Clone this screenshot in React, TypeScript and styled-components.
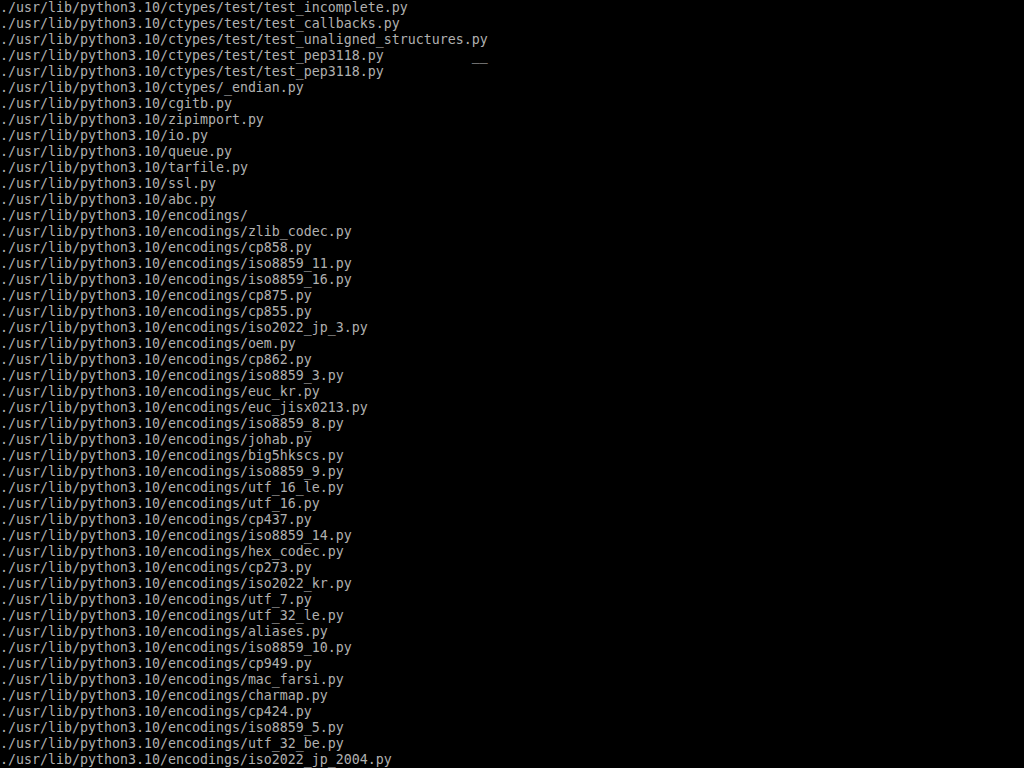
import React from "react";
import styled, {createGlobalStyle} from "styled-components";

const GlobalStyle = createGlobalStyle`
  html, body {
    margin: 0;
    padding: 0;
    background: #000;
  }
`;

const Screen = styled.div`
  width: 1024px;
  height: 768px;
  overflow: hidden;
  background: #000;
  color: #b0b0b0;
  font-family: "DejaVu Sans Mono", "Liberation Mono", monospace;
  font-size: 13.29px;
  display: flex;
  flex-direction: column;
`;

const Line = styled.div`
  height: 16px;
  line-height: 16px;
  white-space: pre;
`;

const PY = "./usr/lib/python3.10/";
const ENC = PY + "encodings/";

const lines: string[] = [
    PY + "ctypes/test/test_incomplete.py",
    PY + "ctypes/test/test_callbacks.py",
    PY + "ctypes/test/test_unaligned_structures.py",
    (PY + "ctypes/test/test_pep3118.py").padEnd(59) + "__",
    PY + "ctypes/test/test_pep3118.py",
    PY + "ctypes/_endian.py",
    PY + "cgitb.py",
    PY + "zipimport.py",
    PY + "io.py",
    PY + "queue.py",
    PY + "tarfile.py",
    PY + "ssl.py",
    PY + "abc.py",
    ENC,
    ...[
        "zlib_codec.py", "cp858.py", "iso8859_11.py", "iso8859_16.py", "cp875.py",
        "cp855.py", "iso2022_jp_3.py", "oem.py", "cp862.py", "iso8859_3.py",
        "euc_kr.py", "euc_jisx0213.py", "iso8859_8.py", "johab.py", "big5hkscs.py",
        "iso8859_9.py", "utf_16_le.py", "utf_16.py", "cp437.py", "iso8859_14.py",
        "hex_codec.py", "cp273.py", "iso2022_kr.py", "utf_7.py", "utf_32_le.py",
        "aliases.py", "iso8859_10.py", "cp949.py", "mac_farsi.py", "charmap.py",
        "cp424.py", "iso8859_5.py", "utf_32_be.py", "iso2022_jp_2004.py",
    ].map((f) => ENC + f),
];

const App = () => {
    return (
        <>
            <GlobalStyle />
            <Screen>
                {lines.map((l, i) => (
                    <Line key={i}>{l}</Line>
                ))}
            </Screen>
        </>
    );
};

export default App;
